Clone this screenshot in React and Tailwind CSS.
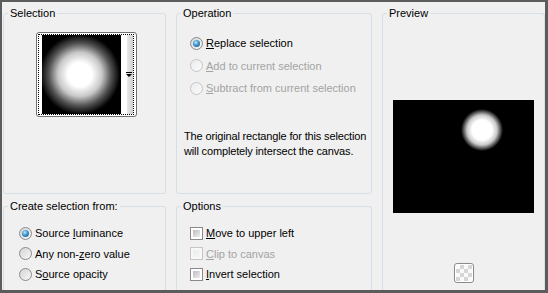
import React from 'react';

// Win7-style radio button
function Radio({ checked, disabled }) {
  return (
    <span
      className={`w-[13px] h-[13px] rounded-full border flex items-center justify-center shrink-0 ${
        disabled
          ? 'border-[#c6c6c6] bg-[linear-gradient(135deg,#ececec,#fafafa)]'
          : 'border-[#8a8a8a] bg-[linear-gradient(135deg,#d4d4d4,#f8f8f8)]'
      }`}
    >
      {checked && (
        <span className="w-[7px] h-[7px] rounded-full bg-[radial-gradient(circle_at_40%_35%,#bfeafd_0,#3d95cc_45%,#14507f_100%)]" />
      )}
    </span>
  );
}

// Win7-style checkbox
function Check({ disabled }) {
  return (
    <span
      className={`w-[13px] h-[13px] border p-[2px] shrink-0 ${
        disabled ? 'border-[#c6c6c6] bg-[#f7f7f7]' : 'border-[#8a8a8a] bg-white'
      }`}
    >
      <span
        className={`block w-full h-full ${
          disabled
            ? 'bg-[linear-gradient(135deg,#ececec,#f6f6f6)]'
            : 'bg-[linear-gradient(135deg,#bdbdbd,#eeeeee)]'
        }`}
      />
    </span>
  );
}

// label with an underlined access key
function Label({ pre = '', hot, post = '', disabled }) {
  return (
    <span className={`whitespace-nowrap ${disabled ? 'text-[#a3a3a3]' : 'text-black'}`}>
      {pre}
      <span className="underline underline-offset-[1px]">{hot}</span>
      {post}
    </span>
  );
}

function Group({ title, className = '', children }) {
  return (
    <fieldset className={`border border-[#d5dfe5] rounded-[3px] min-w-0 ${className}`}>
      <legend className="ml-[4px] px-[2px] leading-[14px]">{title}</legend>
      {children}
    </fieldset>
  );
}

export default function App() {
  const radioRow = 'flex items-center gap-[3px] h-[22.5px]';
  const bottomRow = 'flex items-center gap-[3px] h-[20.5px]';

  return (
    <div className="w-[548px] h-[293px] bg-[#f0f0f0] border-t-2 border-l-2 border-r-[3px] border-b-[3px] border-[#5c5c5c] overflow-hidden font-['Liberation_Sans',Arial,sans-serif] text-[11px] text-black">
      <div className="grid grid-cols-[163px_196px_163px] grid-rows-[188px_1fr] gap-x-[10px] gap-y-[5px] pt-[4px] pl-[1px] h-full">
        {/* Selection */}
        <Group title="Selection">
          <div className="mt-[12px] ml-[32px] w-[101px] h-[85px] border border-[#707070] rounded-[3px] bg-white p-[1px] pr-[2px]">
            <div className="flex h-full border border-dotted border-black pl-[3px]">
              <div className="w-[79px] h-full bg-[radial-gradient(circle_at_48%_50%,#fff_0px,#fff_12px,#c8c8c8_22px,#555_31px,#000_40px)]" />
              <div className="w-[12px] h-full flex items-center justify-end bg-[linear-gradient(90deg,#fff_45%,#e6e6e6_55%,#cfcfcf)]">
                <svg width="6" height="5" viewBox="0 0 6 5" className="mr-[1px]">
                  <rect x="0" y="0" width="6" height="1" fill="#000" />
                  <path d="M0 2h6l-3 3z" fill="#000" />
                </svg>
              </div>
            </div>
          </div>
        </Group>

        {/* Operation */}
        <Group title="Operation">
          <div className="mt-[12px] pl-[13px] flex flex-col">
            <div className={radioRow}>
              <Radio checked />
              <Label hot="R" post="eplace selection" />
            </div>
            <div className={radioRow}>
              <Radio disabled />
              <Label hot="A" post="dd to current selection" disabled />
            </div>
            <div className={radioRow}>
              <Radio disabled />
              <Label hot="S" post="ubtract from current selection" disabled />
            </div>
          </div>
          <p className="mt-[29px] pl-[7px] leading-[15px] whitespace-nowrap tracking-[-0.15px]">
            The original rectangle for this selection
            <br />
            will completely intersect the canvas.
          </p>
        </Group>

        {/* Preview */}
        <Group title="Preview" className="row-span-2 border-b-0 rounded-b-none">
          <div className="mt-[80px] mx-auto w-[141px] h-[113px] bg-[radial-gradient(circle_at_89px_30px,#fff_0px,#fff_10px,#c8c8c8_15px,#000_21px)]" />
          <div className="mt-[50px] mx-auto w-[20px] h-[20px] border border-[#8b8b8b] rounded-[3px] p-[1px] bg-white">
            <div className="w-full h-full bg-[conic-gradient(#d6d6d6_25%,#fafafa_0_50%,#d6d6d6_0_75%,#fafafa_0)] bg-[length:8px_8px]" />
          </div>
        </Group>

        {/* Create selection from */}
        <Group title="Create selection from:" className="border-b-0 rounded-b-none">
          <div className="mt-[10px] pl-[15px] flex flex-col">
            <div className={bottomRow}>
              <Radio checked />
              <Label pre="Source " hot="l" post="uminance" />
            </div>
            <div className={bottomRow}>
              <Radio />
              <Label pre="Any non-" hot="z" post="ero value" />
            </div>
            <div className={bottomRow}>
              <Radio />
              <Label pre="S" hot="o" post="urce opacity" />
            </div>
          </div>
        </Group>

        {/* Options */}
        <Group title="Options" className="border-b-0 rounded-b-none">
          <div className="mt-[10px] pl-[13px] flex flex-col">
            <div className={bottomRow}>
              <Check />
              <Label hot="M" post="ove to upper left" />
            </div>
            <div className={bottomRow}>
              <Check disabled />
              <Label hot="C" post="lip to canvas" disabled />
            </div>
            <div className={bottomRow}>
              <Check />
              <Label hot="I" post="nvert selection" />
            </div>
          </div>
        </Group>
      </div>
    </div>
  );
}
